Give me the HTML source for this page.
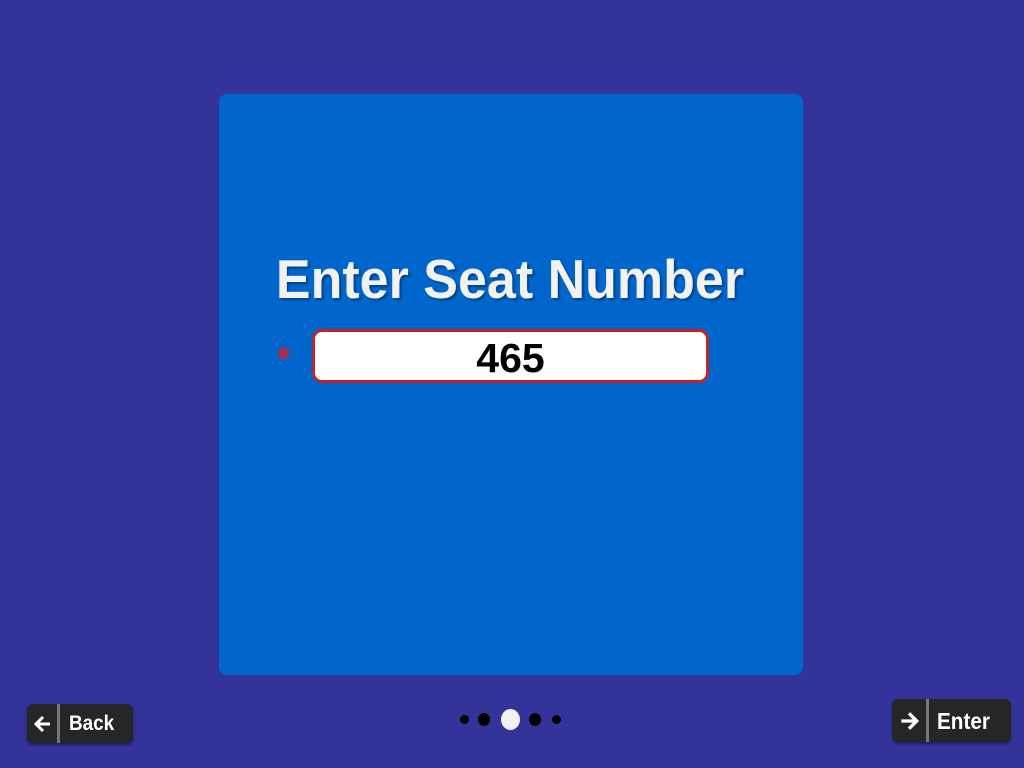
<!DOCTYPE html>
<html><head><style>
body{margin:0;width:1024px;height:768px;background:#343399;position:relative;overflow:hidden;font-family:"Liberation Sans",sans-serif}
.panel{position:absolute;left:219px;top:94px;width:584px;height:581px;background:#0066cc;border-radius:8px}
h1{position:absolute;left:219px;width:584px;top:250px;margin:0;text-align:center;color:#f2f2f2;font-size:52px;font-weight:bold;text-shadow:2px 2px 2px rgba(0,0,0,.35);transform:translateX(-1px) scaleY(1.05)}
.inp{position:absolute;left:312px;top:329px;width:391px;height:48px;border:3px solid #c0242a;border-radius:10px;background:#fff;text-align:center;font-size:41px;font-weight:bold;line-height:52px;color:#000}
.star{position:absolute;left:277px;top:340px;color:#d02030;font-size:34px;font-weight:bold}
.btn{position:absolute;background:#262626;border-radius:6px;color:#fff;font-weight:bold;font-size:21px;box-shadow:0 2px 2px rgba(0,0,0,.4)}
.btn .d{position:absolute;top:0;bottom:0;width:3px;background:#777}
.btn span{position:absolute}
.dot{position:absolute;background:#000;border-radius:50%}
</style></head><body>
<div class="panel"></div>
<h1>Enter Seat Number</h1>
<div class="star">*</div>
<div class="inp">465</div>
<div class="btn" style="left:27px;top:704px;width:106px;height:39px">
<svg style="position:absolute;left:6px;top:10px" width="20" height="20" viewBox="0 0 20 20"><path d="M17 10H4M10 3L3 10l7 7" stroke="#fff" stroke-width="3" fill="none"/></svg>
<div class="d" style="left:30px"></div><span style="left:42px;top:8px;transform:scaleX(.9);transform-origin:left">Back</span></div>
<div class="btn" style="left:892px;top:699px;width:119px;height:43px">
<svg style="position:absolute;left:6px;top:11px" width="22" height="22" viewBox="0 0 20 20"><path d="M3 10h13M10 3l7 7-7 7" stroke="#fff" stroke-width="3" fill="none"/></svg>
<div class="d" style="left:34px"></div><span style="left:45px;top:9px;font-size:23px;transform:scaleX(.9);transform-origin:left">Enter</span></div>
<div class="dot" style="left:460px;top:715px;width:9px;height:9px"></div>
<div class="dot" style="left:478px;top:713px;width:12px;height:13px"></div>
<div class="dot" style="left:501px;top:709px;width:19px;height:21px;background:#f2f2f2"></div>
<div class="dot" style="left:529px;top:713px;width:12px;height:13px"></div>
<div class="dot" style="left:552px;top:715px;width:9px;height:9px"></div>
</body></html>
